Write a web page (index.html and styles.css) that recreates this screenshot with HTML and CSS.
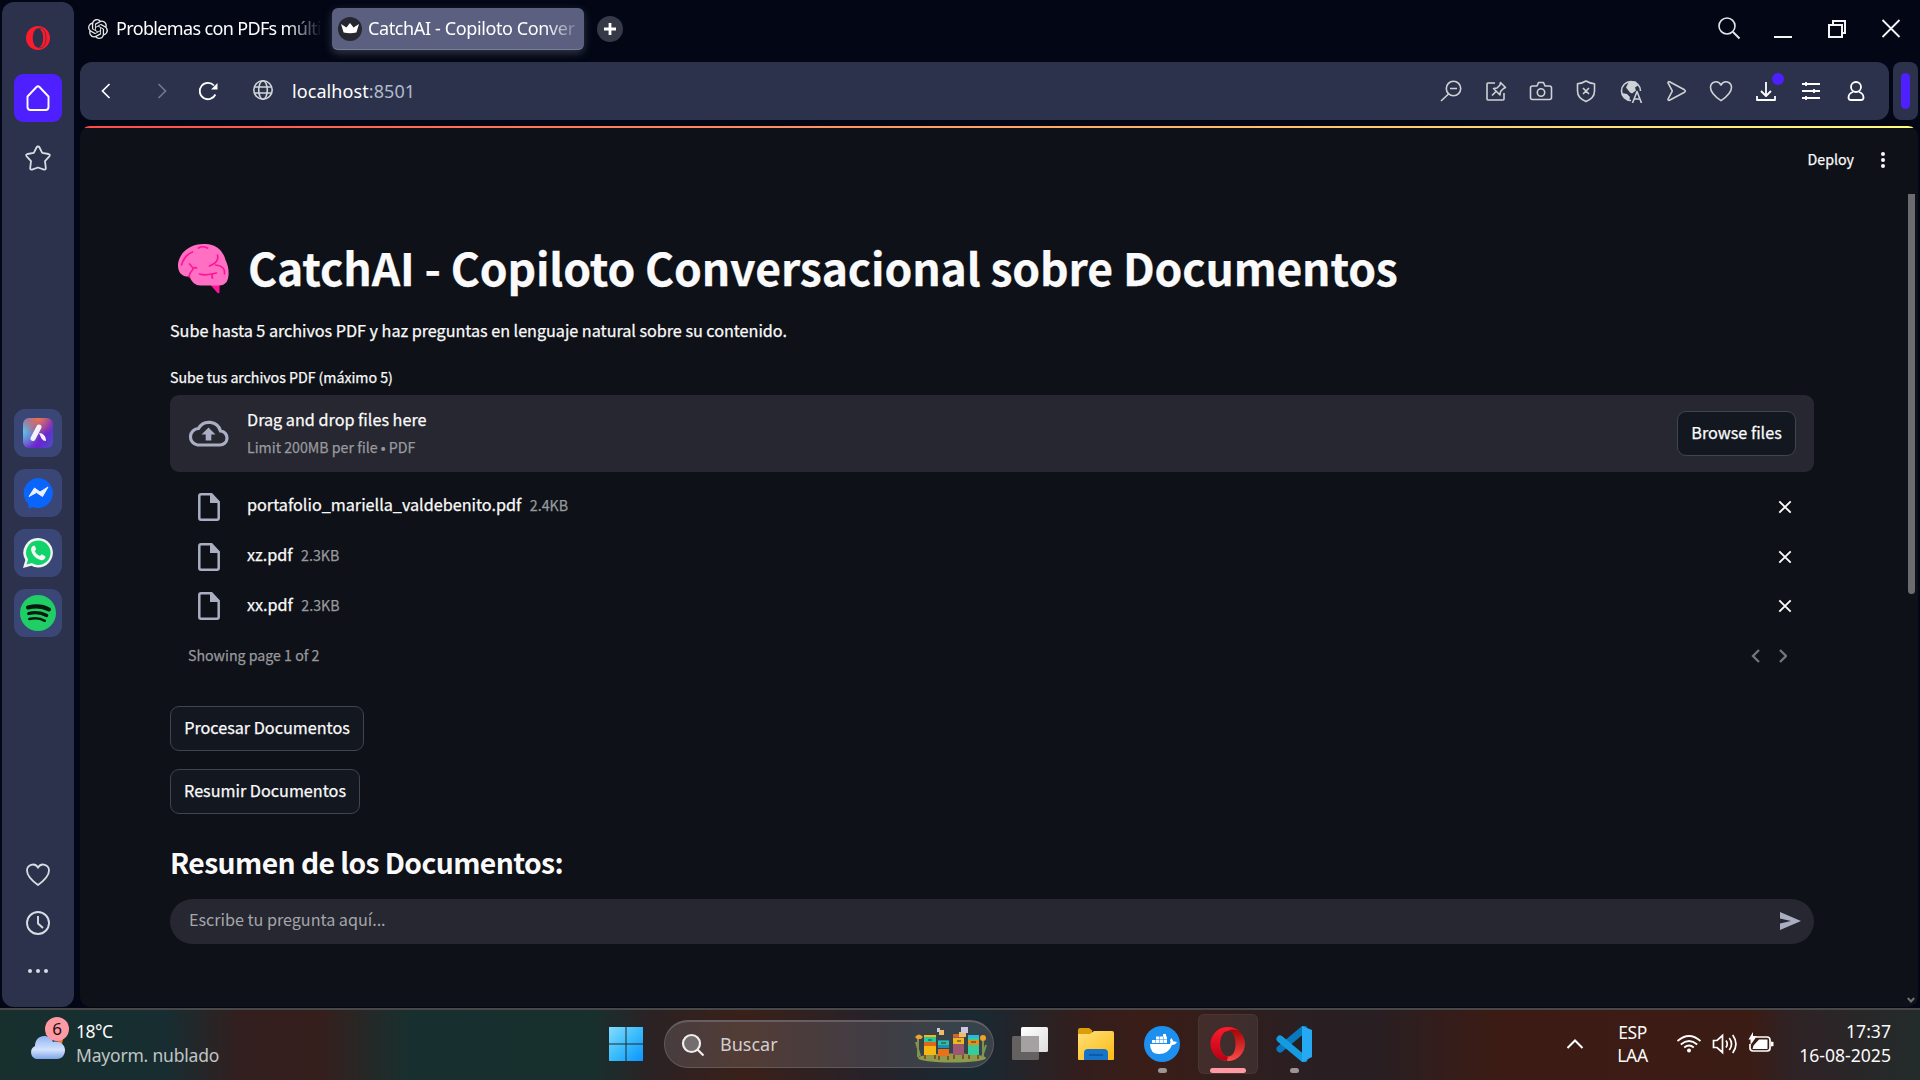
FILE: index.html
```html
<!DOCTYPE html>
<html lang="es">
<head>
<meta charset="utf-8">
<title>CatchAI - Copiloto Conversacional</title>
<link rel="stylesheet" href="styles.css">
</head>
<body>
<div class="desktop">
  <div class="browser">
    <nav class="sidebar">
      <svg class="side-opera" width="24" height="24" viewBox="0 0 24 24"><path fill="#ff1b2d" fill-rule="evenodd" d="M12 0C5.400 0 0 5.400 0 12s5.400 12 12 12 12-5.400 12-12S18.600 0 12 0zm0 2.600c3 0 5.200 4 5.200 9.400s-2.200 9.400-5.200 9.400-5.200-4-5.200-9.400S9 2.600 12 2.600z"/><path d="M12 2.600c4.500-1.800 8 2 8 9.400s-3.500 11.200-8 9.400" fill="none" stroke="#2c324b" stroke-width=".7"/></svg>
      <a class="side-home"><svg width="26" height="28" viewBox="0 0 26 28" fill="none" stroke="#fff" stroke-width="1.900" stroke-linejoin="round"><path d="M2.500 12.500 11.500 3q1.500-1.400 3 0l9 9.500v10.500q0 3-3 3h-15q-3 0-3-3z"/></svg></a>
      <svg class="side-star" width="28" height="28" viewBox="0 0 28 28" fill="none" stroke="#d5dee4" stroke-width="1.800" stroke-linejoin="round"><path d="M14 2.500q1 0 1.500 1l2.700 5.300 6.300 1.200q2.200.6.800 2.400l-4.300 4.700.8 6.900q.1 2-1.800 1.600L14 23.500l-6 2.100q-1.900.4-1.800-1.600l.8-6.900-4.300-4.700Q1.300 10.600 3.500 10l6.300-1.200 2.700-5.300q.5-1 1.500-1z"/></svg>
      <div class="side-apps">
        <a class="side-app"><span class="aria"><svg width="30" height="30" viewBox="0 0 30 30" stroke="#f2f2fa" stroke-width="5" stroke-linecap="round"><path d="M16 9 10 20.500"/><path fill="#f2f2fa" stroke="none" d="M16 15c4 0 7 3 7 8q-3 0-4.500-2.500z"/></svg></span></a>
        <a class="side-app"><svg width="30" height="30" viewBox="0 0 30 30"><path fill="#0866ff" d="M15 0a15 15 0 1 1-5 29.200L5.500 30V26A15 15 0 0 1 15 0z"/><path fill="#eef0fa" d="m6 18.500 5.500-8.500 5.500 4 8-5-5.500 9.500-6-4z" stroke="#eef0fa" stroke-linejoin="round"/></svg></a>
        <a class="side-app"><svg width="30" height="30" viewBox="0 0 30 30"><path fill="#f2f2f2" d="M15.300 0a14.700 14.700 0 1 1-7 27.700L0 30l2.300-8A14.700 14.700 0 0 1 15.300 0z"/><path fill="#10d46b" d="M15.300 2.600a12.200 12.200 0 1 1-6.500 22.500l-5.200 1.400 1.500-5A12.200 12.200 0 0 1 15.300 2.600z"/><path fill="#f5f5f5" d="M10.500 7.700q-3 1.500-2.400 4.600C9.500 18 14 21.500 18.500 22.200c2.500 0 4-1.700 4-3.700L18.800 16.300l-1.900 1.800q-3.600-1.400-5.200-4.900l1.500-1.900-1.400-3.500z"/></svg></a>
        <a class="side-app"><svg width="36" height="36" viewBox="0 0 36 36"><circle cx="18" cy="18" r="18" fill="#1fcf65"/><g fill="none" stroke="#07190e" stroke-linecap="round"><path stroke-width="4" d="M8 12.500q12-3 21 2"/><path stroke-width="3.200" d="M8.700 18.500q10-2.600 18 2"/><path stroke-width="2.500" d="M9.300 24q9-2 15.500 1.800"/></g></svg></a>
      </div>
      <div class="side-bottom">
        <svg width="26" height="26" viewBox="0 0 26 26" fill="none" stroke="#d5dee4" stroke-width="1.800"><path d="M13 24Q2 16 2 9.500c0-5.500 7.500-8.500 11-3 3.500-5.500 11-2.500 11 3q0 6.500-11 14.500z"/></svg>
        <svg width="26" height="26" viewBox="0 0 26 26" fill="none" stroke="#d5dee4" stroke-width="1.900"><circle cx="13" cy="13" r="11"/><path d="M13 6v7.500l5 4.500"/></svg>
        <svg width="26" height="26" viewBox="0 0 26 26" fill="#d5dee4"><circle cx="5" cy="13" r="2"/><circle cx="13" cy="13" r="2"/><circle cx="21" cy="13" r="2"/></svg>
      </div>
    </nav>
    <div class="window">
      <header class="tabs">
        <div class="tab">
          <svg width="20" height="20" viewBox="0 0 24 24" fill="#e8e8e8"><path d="M22.280 9.820a5.980 5.980 0 0 0-.52-4.910 6.050 6.050 0 0 0-6.510-2.900A6.070 6.070 0 0 0 4.980 4.180a5.980 5.980 0 0 0-4 2.900 6.050 6.050 0 0 0 .74 7.100 5.980 5.980 0 0 0 .51 4.910 6.050 6.050 0 0 0 6.510 2.900A5.980 5.980 0 0 0 13.260 24a6.060 6.060 0 0 0 5.770-4.210 5.990 5.990 0 0 0 4-2.900 6.060 6.060 0 0 0-.75-7.070zM13.260 22.430a4.480 4.480 0 0 1-2.880-1.040l4.920-2.840a.8.8 0 0 0 .39-.68v-6.740l2.020 1.170v5.620a4.500 4.500 0 0 1-4.450 4.510zM3.600 18.300a4.470 4.470 0 0 1-.53-3.010l4.920 2.840a.77.77 0 0 0 .78 0l5.840-3.370v2.330l-4.870 2.850A4.500 4.500 0 0 1 3.600 18.300zM2.340 7.900a4.490 4.490 0 0 1 2.370-1.980v5.680a.77.77 0 0 0 .39.680l5.810 3.350-2.020 1.170-4.830-2.790A4.500 4.500 0 0 1 2.340 7.900zm16.600 3.860-5.840-3.390L15.120 7.200l4.830 2.790a4.490 4.490 0 0 1-.68 8.100v-5.680a.79.79 0 0 0-.33-.65zm2.010-3.030-4.920-2.860a.78.78 0 0 0-.79 0L9.410 9.230V6.900l4.880-2.810a4.500 4.500 0 0 1 6.660 4.640zM8.310 12.860l-2.020-1.160V6.070a4.500 4.500 0 0 1 7.380-3.450L8.750 5.460a.8.8 0 0 0-.39.680zm1.100-2.360L12.010 9l2.610 1.500v3l-2.600 1.500-2.600-1.500z"/></svg>
          <span class="tab-title t1">Problemas con PDFs múlti</span>
        </div>
        <div class="tab active">
          <svg width="24" height="24" viewBox="0 0 24 24"><circle cx="12" cy="12" r="12" fill="#262730"/><path fill="#fff" d="m3 7 5.400 3.500L12 6l3.600 4.500L21 7l-2.600 8.500q-6.400 1.500-12.800 0z"/></svg>
          <span class="tab-title t2">CatchAI - Copiloto Conver</span>
        </div>
        <svg class="plus" width="26" height="26" viewBox="0 0 26 26"><circle cx="13" cy="13" r="13" fill="#363a48"/><path d="M13 7v12M7 13h12" stroke="#fff" stroke-width="2.800"/></svg>
        <div class="controls">
          <svg width="24" height="24" viewBox="0 0 24 24" fill="none" stroke="#e3e6e9" stroke-width="1.600"><circle cx="10" cy="9" r="8"/><path d="m16 15 6.500 6.500" stroke-width="2"/></svg>
          <svg width="24" height="24" viewBox="0 0 24 24"><path d="M3 20h18" stroke="#f4f4f4" stroke-width="2"/></svg>
          <svg width="24" height="24" viewBox="0 0 24 24" fill="none" stroke="#f4f4f4" stroke-width="2"><path d="M4 8h13v12H4zM8 8V4h12v12h-3"/></svg>
          <svg width="24" height="24" viewBox="0 0 24 24"><path d="m3.500 3 17 17m0-17-17 17" stroke="#f4f4f4" stroke-width="1.800"/></svg>
        </div>
      </header>
      <div class="address-row">
        <div class="address">
          <svg class="back" width="20" height="20" viewBox="0 0 20 20" fill="none" stroke="#fff" stroke-width="1.700"><path d="m13.500 3-7 7 7 7"/></svg>
          <svg class="fwd" width="20" height="20" viewBox="0 0 20 20" fill="none" stroke="#72788b" stroke-width="1.700"><path d="m6.500 3 7 7-7 7"/></svg>
          <svg class="reload" width="22" height="22" viewBox="0 0 22 22" fill="none" stroke="#fff" stroke-width="1.800"><path d="M18.400 14.500A8.200 8.200 0 1 1 17 5.500"/><path fill="#fff" stroke="none" d="M20.500 3v6.500H14z"/></svg>
          <svg class="globe" width="22" height="22" viewBox="0 0 22 22" fill="none" stroke="#d2d6d8" stroke-width="1.600"><circle cx="11" cy="11" r="9.200"/><ellipse cx="11" cy="11" rx="4.300" ry="9.200"/><path d="M2.500 8h17M2.500 14h17"/></svg>
          <span class="url">localhost<span class="port">:8501</span></span>
          <div class="tools">
            <svg viewBox="0 0 24 24"><circle cx="14.500" cy="9.500" r="7.200"/><path d="M9.500 15 2 22M11 9.500h7" /></svg>
            <svg viewBox="0 0 24 24"><path d="M11 4H4q-1 0-1 1v15q0 1 1 1h15q1 0 1-1v-6M16.500 3.500l5 5-2 1-3 3-.5 3.500-6.500-6.500 3.500-.5 3-3zM12 12.500 8 16.500"/></svg>
            <svg viewBox="0 0 24 24"><path d="M3.500 7H8l1.500-3.500h5L16 7h4.500q2 0 2 2v9.500q0 2-2 2h-17q-2 0-2-2V9q0-2 2-2z"/><circle cx="12" cy="13.500" r="3.700"/></svg>
            <svg viewBox="0 0 24 24"><path d="M12 2q4 2.500 8.500 2.700V12q0 7-8.500 10.500Q3.500 19 3.500 12V4.700Q8 4.500 12 2zM9 9l6 6m0-6-6 6"/></svg>
            <svg viewBox="0 0 24 24"><path d="M12 21.500A9.500 9.500 0 1 1 21.500 12"/><path fill="#ced2d5" stroke="none" d="M10 2.500h7l2 4-3 2 1 3-4 3-2-1-4-5zM3 14l5 1 3 3-1 4-5-3z"/><path d="M13.500 24 18 12.500 22.500 24M15 20h6"/></svg>
            <svg viewBox="0 0 24 24"><path d="M4 3.800q0-1.500 1.500-1l15 8q1.700 1.200 0 2.400l-15 8q-1.500.5-1.500-1l4-7.500q.5-.7 0-1.400z"/></svg>
            <svg viewBox="0 0 24 24"><path d="M12 21.700Q1.500 14.500 1.500 8.500c0-6 7.500-8 10.500-2.500 3-5.500 10.500-3.500 10.500 2.500q0 6-10.500 13.200z"/></svg>
            <span class="download"><svg class="white" viewBox="0 0 24 24"><path d="M12 3v14m-5-5 5 5 5-5M3 17v4h18v-4"/></svg><i class="notice"></i></span>
            <svg class="white" viewBox="0 0 24 24"><path d="M3 5h18M3 12h18M3 19h18M7 3v4m8 3v4m-8 3v4"/></svg>
            <svg class="white" viewBox="0 0 24 24"><circle cx="12" cy="8" r="5"/><path d="M9 13q-4.500 1.500-4.500 5.500 0 2.500 2.500 2.500h10q2.500 0 2.500-2.500 0-4-4.500-5.500"/></svg>
          </div>
        </div>
        <div class="extension"><i></i></div>
      </div>
      <main class="page">
        <div class="decoration"></div>
        <div class="app-header"><span class="deploy">Deploy</span><svg width="6" height="18" viewBox="0 0 6 18" fill="#fafafa"><circle cx="3" cy="3" r="2"/><circle cx="3" cy="9" r="2"/><circle cx="3" cy="15" r="2"/></svg></div>
        <div class="scrollbar"></div>
        <svg class="scroll-arrow" width="8" height="8" viewBox="0 0 8 8"><path d="m.8 2 3.200 3.500L7.200 2" fill="none" stroke="#707176" stroke-width="2"/></svg>
        <div class="content">
          <h1><svg width="52" height="52" viewBox="0 0 52 52"><path fill="#ff1594" d="M33 42h9v7q0 2-2 1z"/><path fill="#ff6fc4" d="M26 1C38 0 46 8 48 17c4 8 4 17 1 22q-3 4-9 3.500H23q-8 0-11-9C5 34 0 30 .5 21 2 9 13 1 26 1z"/><path d="M4 22q3-10 11-13m6-4q4-2.500 9 0M12 21q4 4 3 5 3-2 4-1m-4 2q-4 4-3 7m10-3q6 2 17-1m-4 1q-1 2 0 4m-3-12q10-4 8-11m-2 10q10 1 9 9" fill="none" stroke="#ff1594" stroke-width="1.700" stroke-linecap="round"/></svg><span>CatchAI - Copiloto Conversacional sobre Documentos</span></h1>
          <p class="intro">Sube hasta 5 archivos PDF y haz preguntas en lenguaje natural sobre su contenido.</p>
          <label class="upload-label">Sube tus archivos PDF (máximo 5)</label>
          <section class="dropzone">
            <svg class="cloud" width="41" height="28" viewBox="0 0 41 28"><path d="M9.500 26h22a7 7 0 0 0 1-14A12 12 0 0 0 10.500 9.500 8.300 8.300 0 0 0 9.500 26z" fill="none" stroke="#a9aec3" stroke-width="3.200"/><path fill="#a9aec3" d="m20.500 8.500 7 7h-4.200v6h-5.600v-6h-4.200z"/></svg>
            <div class="drop-copy"><div class="drop-title">Drag and drop files here</div><div class="drop-limit">Limit 200MB per file • PDF</div></div>
            <button class="btn browse">Browse files</button>
          </section>
          <div class="files">
            <div class="file"><svg class="doc" width="22" height="28" viewBox="0 0 22 28"><path d="M1.300 3q0-1.700 1.700-1.700h10.500L20.700 9v16q0 1.700-1.700 1.700H3q-1.700 0-1.700-1.700z" fill="none" stroke="#a9aec3" stroke-width="2.500"/><path fill="#a9aec3" d="M12 1h2l7 7.500V10h-9z"/></svg><span class="name n1">portafolio_mariella_valdebenito.pdf</span><span class="size">2.4KB</span><svg class="x" width="14" height="14" viewBox="0 0 14 14"><path d="m1.300 1.300 11.400 11.400m0-11.400L1.300 12.700" stroke="#fafafa" stroke-width="1.900"/></svg></div>
            <div class="file"><svg class="doc" width="22" height="28" viewBox="0 0 22 28"><path d="M1.300 3q0-1.700 1.700-1.700h10.500L20.700 9v16q0 1.700-1.700 1.700H3q-1.700 0-1.700-1.700z" fill="none" stroke="#a9aec3" stroke-width="2.500"/><path fill="#a9aec3" d="M12 1h2l7 7.500V10h-9z"/></svg><span class="name">xz.pdf</span><span class="size">2.3KB</span><svg class="x" width="14" height="14" viewBox="0 0 14 14"><path d="m1.300 1.300 11.400 11.400m0-11.400L1.300 12.700" stroke="#fafafa" stroke-width="1.900"/></svg></div>
            <div class="file"><svg class="doc" width="22" height="28" viewBox="0 0 22 28"><path d="M1.300 3q0-1.700 1.700-1.700h10.500L20.700 9v16q0 1.700-1.700 1.700H3q-1.700 0-1.700-1.700z" fill="none" stroke="#a9aec3" stroke-width="2.500"/><path fill="#a9aec3" d="M12 1h2l7 7.500V10h-9z"/></svg><span class="name">xx.pdf</span><span class="size">2.3KB</span><svg class="x" width="14" height="14" viewBox="0 0 14 14"><path d="m1.300 1.300 11.400 11.400m0-11.400L1.300 12.700" stroke="#fafafa" stroke-width="1.900"/></svg></div>
          </div>
          <div class="pager"><span>Showing page 1 of 2</span><svg width="36" height="14" viewBox="0 0 36 14" fill="none" stroke="#75767a" stroke-width="2.300"><path d="M8 1 2 7l6 6M29 1l6 6-6 6"/></svg></div>
          <button class="btn process">Procesar Documentos</button>
          <button class="btn summarize">Resumir Documentos</button>
          <h2>Resumen de los Documentos:</h2>
          <div class="chat"><span>Escribe tu pregunta aquí...</span><svg width="21" height="18" viewBox="0 0 21 18"><path fill="#a9aec3" d="M0 0 21 9 0 18v-6.500L11 9 0 6.500z"/></svg></div>
        </div>
      </main>
    </div>
  </div>
  <footer class="taskbar">
    <div class="weather">
      <div class="weather-icon"><svg width="37" height="28" viewBox="0 0 37 28"><defs><linearGradient id="cl" x2="0" y2="1"><stop stop-color="#8fb3f5"/><stop offset=".6" stop-color="#d3e2fc"/><stop offset="1" stop-color="#7fa4ea"/></linearGradient></defs><path fill="#f77b18" d="M17 3h14l4 5-1 5z"/><path fill="url(#cl)" d="M8 28a7 7 0 0 1-1-13C7 8 12 4.500 17 5s7 3 8 6c7-2 12 3 12 8s-3 9-8 9z"/></svg><span class="badge">6</span></div>
      <div class="weather-text"><div class="temp">18°C</div><div class="cond">Mayorm. nublado</div></div>
    </div>
    <div class="launcher">
      <svg class="win" width="36" height="36" viewBox="0 0 36 36"><defs><linearGradient id="wn" x2="1" y2="1"><stop stop-color="#84dcff"/><stop offset=".5" stop-color="#3bbcfb"/><stop offset="1" stop-color="#0996ff"/></linearGradient></defs><path fill="url(#wn)" d="M1 1h16.500v16.500H1zm17.500 0H35v16.500H18.500zM1 18.500h16.500V35H1zm17.500 0H35V35H18.500z"/></svg>
      <div class="search"><svg width="24" height="24" viewBox="0 0 24 24" fill="none" stroke="#f0eeee" stroke-width="2.200"><circle cx="10.500" cy="10.500" r="8.500" fill="#746c6d"/><path d="m16.500 16.500 6 6"/></svg><span>Buscar</span>
        <svg class="hives" width="72" height="36" viewBox="0 0 72 36"><ellipse cx="37" cy="31" rx="34" ry="4.500" fill="#8f9b4c"/><path d="M3 12v18M1 15l4 14M68 14v16m3-12-4 12" stroke="#7d9450" stroke-width="2"/><g><path fill="#f5b714" d="M9 8h12v20H9z"/><path fill="#27c9a0" d="M9 10h12v5H9z"/><path fill="#df6717" d="M9 15h12v4H9z"/><path fill="#1c8fb7" d="M23 13h11v8H23z"/><path fill="#33bd98" d="M23 14h11v4H23z"/><path fill="#e8711a" d="M23 22h11v7H23z"/><path fill="#9c5775" d="M38 8h11v20H38z"/><path fill="#efb91d" d="M38 11h11v6H38z"/><path fill="#d7651f" d="M38 7h11v3H38z"/><path fill="#35cd9a" d="M53 9h11v19H53z"/><path fill="#e98d17" d="M53 13h11v5H53z"/><path fill="#2eb8d7" d="M53 8h11v3H53z"/></g><path d="M13 13h4m9 3h5m11-2h4m10 1h5" stroke="#263a3c" stroke-width="1.200"/><path d="M10 28v4m10-4v4m4-3v4m9-4v4m6-5v4m9-4v4m6-4v4m9-4v4" stroke="#855026" stroke-width="2"/><path fill="#f2a228" d="M0 10q4-5 8 0l-2 2H2z"/><circle cx="68" cy="11" r="3" fill="#f2a228"/><path fill="#efbd66" d="M24 3h5v5h-5zm20 2h7v5h-7z"/><path fill="#cbc7e2" d="M22 1h3v4h-3zm24-1h7v6h-7z"/></svg></div>
      <svg class="views" width="36" height="36" viewBox="0 0 36 36"><defs><linearGradient id="tv" x2="1" y2="1"><stop stop-color="#fff"/><stop offset="1" stop-color="#ddd"/></linearGradient></defs><rect y="10" width="27" height="24" rx="1.500" fill="#656161"/><rect x="9" y="1" width="27" height="25" rx="1.500" fill="url(#tv)"/><path fill="#a3a1a1" d="M9 10h18v16H9z"/></svg>
      <svg class="folder" width="36" height="36" viewBox="0 0 36 36"><defs><linearGradient id="fd" x2=".8" y2="1"><stop stop-color="#ffe07b"/><stop offset="1" stop-color="#fdbd18"/></linearGradient></defs><path fill="#dc9d0b" d="M0 4q0-2 2-2h9l4 3h-1v5H0z"/><path fill="url(#fd)" d="M0 8h12l4-3h18q2 0 2 2v26q0 1-1 1H1q-1 0-1-1z"/><path fill="#1673c7" d="M6 34V27q0-4 4-4h16q4 0 4 4v7z"/><path d="M11 29h14" stroke="#0b50a0" stroke-width="1.500"/></svg>
      <div class="app"><svg width="36" height="36" viewBox="0 0 36 36"><circle cx="18" cy="18" r="18" fill="#1d8fef"/><path fill="#fff" d="M6 18h20q1-2 0-4l1.500-2 2 3.500q2-.3 3.500.5-1.500 3-5 3-3.500 9-13 9Q6 28 6 18zM8 14h3.500v3H8zm4-3.500h3.500v3H12zm0 3.500h3.500v3H12zm4-3.500h3.500v3H16zm0 3.500h3.500v3H16zm3-6h3v2.500h-3zm1 2.500h3v3h-3zm0 3.500h3v3h-3z"/></svg><i></i></div>
      <div class="app current"><svg width="36" height="36" viewBox="0 0 36 36"><defs><linearGradient id="or" x2="0" y2="1"><stop stop-color="#ff1b2d"/><stop offset="1" stop-color="#b50012"/></linearGradient><linearGradient id="oi" x2="0" y2="1"><stop stop-color="#9c0000"/><stop offset="1" stop-color="#ff4b4b"/></linearGradient></defs><path fill="url(#oi)" fill-rule="evenodd" d="M18 1a17 17 0 1 1 0 34 17 17 0 0 1 0-34zm0 4c-5 0-8 6-8 13s3 12.500 8 12.500 7.500-5.500 7.500-12.500S23 5 18 5z"/><path fill="url(#or)" d="M18 1a17 17 0 0 1 11.500 4.500C26.500 3.500 22 2.500 18 5c-5 0-8 6-8 13s3 12.500 8 12.500q-1 4-1 4.500A17 17 0 0 1 18 1z"/></svg><i></i></div>
      <div class="app"><svg width="36" height="36" viewBox="0 0 36 36"><path d="m4 23 24-20" stroke="#0878c1" stroke-width="7" stroke-linecap="round"/><path d="m4 13 24 20" stroke="#149be0" stroke-width="7" stroke-linecap="round"/><path fill="#25a9f3" d="M26 0l10 4v27l-10 5z"/><path fill="#222021" d="m17 18 9-7v14z"/></svg><i></i></div>
    </div>
    <div class="tray">
      <svg class="up" width="18" height="12" viewBox="0 0 18 12"><path d="m1.500 10 7.500-7.500 7.500 7.500" fill="none" stroke="#fff" stroke-width="2"/></svg>
      <div class="lang"><div>ESP</div><div>LAA</div></div>
      <div class="status">
        <svg width="26" height="24" viewBox="0 0 26 24" fill="none" stroke="#fff" stroke-width="1.700"><path d="M1.500 9q11.500-10 23 0M4.800 12.500q8.200-7 16.400 0M8.200 15.500q4.800-4 9.600 0"/><circle cx="13" cy="18.500" r="2" fill="#fff" stroke="none"/></svg>
        <svg width="26" height="24" viewBox="0 0 26 24" fill="none" stroke="#fff" stroke-width="1.700"><path d="M1.500 8.500H5l5.500-5v17L5 15.500H1.500zM14 8.500q2.500 3.500 0 7M17.300 6q4.500 6 0 12M20.700 3q6.500 9 0 18"/></svg>
        <svg width="26" height="24" viewBox="0 0 26 24"><path d="M8 5h11q3 0 3 3v8q0 3-3 3H5q-3 0-3-3v-4" fill="none" stroke="#fff" stroke-width="1.700"/><path fill="#fff" d="M11 7.500h8.500V17H4.500l1-3.500zM23 9.500l2.500.5v4l-2.500.5zM5 0v4h4L2.500 13V7.500H.5z"/></svg>
      </div>
      <div class="clock"><div class="time">17:37</div><div class="date">16-08-2025</div></div>
    </div>
  </footer>
</div>
</body>
</html>
```
FILE: styles.css
```css
* { box-sizing: border-box; }
html, body { margin: 0; height: 100%; overflow: hidden; }
body { background: #020615; color: #fafafa; font-family: "Noto Sans", sans-serif; }
svg { display: block; flex: none; }
i { display: block; }

.desktop { width: 1920px; height: 1080px; display: flex; flex-direction: column; }
.browser { height: 1008px; display: flex; padding: 2px 2px 0 2px; gap: 6px; }

.sidebar { width: 72px; height: 1005px; background: #2c324b; border-radius: 12px; display: flex; flex-direction: column; align-items: center; padding-top: 24px; }
.side-opera { width: 24px; }
.side-home { margin-top: 24px; width: 48px; height: 48px; border-radius: 9px; background: #4e1fff; display: flex; align-items: center; justify-content: center; }
.side-star { margin-top: 22px; width: 28px; height: 28px; }
.side-apps { margin-top: 236.500px; display: flex; flex-direction: column; gap: 12.200px; }
.side-app { width: 48px; height: 48px; border-radius: 11px; background: #3a4675; display: flex; align-items: center; justify-content: center; }
.aria { width: 30px; height: 30px; border-radius: 6px; background: radial-gradient(circle at 50% 0, #f07548 0, transparent 55%), radial-gradient(circle at 0 45%, #62c4e0 0, transparent 50%), linear-gradient(120deg, #6f6fd0, #6a24d0 65%, #4850c8); }
.side-bottom { margin-top: auto; margin-bottom: 23px; display: flex; flex-direction: column; gap: 22.500px; }

.window { flex: 1; min-width: 0; display: flex; flex-direction: column; }
.tabs { height: 60px; display: flex; align-items: center; padding-bottom: 6px; }
.tab { display: flex; align-items: center; gap: 8px; height: 42px; width: 244px; padding-left: 8px; }
.tab.active { margin-left: 8px; width: 252px; padding-left: 6px; gap: 6px; background: #5b6080; border-bottom: 1px solid #777d9b; border-radius: 6px; box-shadow: 0 3px 9px #343848; }
.tab-title { font-size: 18px; line-height: 26px; margin-top: -2px; white-space: nowrap; color: #fff; flex: 1; -webkit-mask-image: linear-gradient(90deg, #000 82%, transparent 99%); mask-image: linear-gradient(90deg, #000 82%, transparent 99%); }
.t1 { letter-spacing: -.65px; }
.t2 { letter-spacing: -.38px; }
.plus { margin-left: 13px; }
.controls { margin-left: auto; display: flex; gap: 30px; padding-right: 15px; }

.address-row { display: flex; gap: 4px; height: 58px; }
.address { width: 1810px; border-radius: 12px; background: #2c324b; display: flex; align-items: center; padding-left: 16px; }
.fwd { margin-left: 36px; }
.reload { margin-left: 25px; }
.globe { margin-left: 33px; margin-top: -2px; }
.url { margin-left: 18px; font-size: 18px; line-height: 26px; letter-spacing: .08px; color: #fff; }
.port { color: #b0bbcb; }
.tools { margin-left: auto; margin-right: 21px; display: flex; gap: 21px; }
.tools svg { width: 24px; height: 24px; fill: none; stroke: #ced2d5; stroke-width: 1.600; stroke-linejoin: round; }
.tools svg.white { stroke: #fff; stroke-width: 1.800; }
.download { position: relative; }
.notice { position: absolute; left: 18px; top: -6px; width: 12px; height: 12px; border-radius: 50%; background: #4e1fff; }
.extension { width: 25px; border-radius: 8px; background: #2c324b; padding: 11px 8px; }
.extension i { width: 9px; height: 36px; border-radius: 5px; background: #4e1fff; }

.page { margin-top: 6px; height: 881px; background: #0e1117; border-radius: 10px; overflow: hidden; position: relative; font-family: "Noto Sans CJK JP", sans-serif; -webkit-text-stroke: .25px currentColor; }
.decoration { height: 2px; background: linear-gradient(90deg, #ff4b4b, #fffd80); }
.app-header { height: 64px; display: flex; align-items: center; justify-content: flex-end; padding-right: 32px; gap: 26px; }
.deploy { font-size: 14.200px; line-height: 20px; margin-top: -2px; }
.scrollbar { position: absolute; right: 3px; top: 68px; width: 7px; height: 400px; border-radius: 0 0 4px 4px; background: #6b6c70; }
.scroll-arrow { position: absolute; right: 3px; top: 870px; }

.content { width: 1644px; margin-left: 90px; display: flex; flex-direction: column; align-items: flex-start; white-space: nowrap; }
h1 { margin: 46px 0 0; height: 60px; display: flex; align-items: center; padding-left: 7px; gap: 18px; font-size: 44.500px; line-height: 60px; font-weight: 700; letter-spacing: -.16px; }
h1 svg { margin-top: 2px; width: 53px; }
h1 span { margin-top: -2px; }
.intro { margin: 18px 0 0; height: 28px; font-size: 16.200px; line-height: 28px; letter-spacing: -.03px; }
.upload-label { margin-top: 23px; height: 20px; font-size: 14.200px; line-height: 20px; letter-spacing: -.03px; }
.dropzone { margin-top: 8px; width: 100%; height: 77px; border-radius: 9px; background: #262730; display: flex; align-items: center; padding: 0 18px; }
.cloud { margin-top: -2px; }
.drop-copy { margin-left: 18px; margin-top: -2px; }
.drop-title { font-size: 16.200px; line-height: 27px; }
.drop-limit { font-size: 14.200px; line-height: 24px; margin-top: 2px; color: #98999d; }
.btn { font-family: inherit; color: #fafafa; font-size: 16.200px; line-height: 24px; height: 45px; padding: 0 0 3px; border: 1px solid #41444c; border-radius: 9px; background: #131720; white-space: nowrap; }
.browse { width: 119px; margin-left: auto; }
.files { width: 100%; margin-top: 10px; padding: 0 22px 0 28px; }
.file { height: 49.700px; display: flex; align-items: center; }
.file .doc { margin-right: 27px; }
.name { font-size: 16.200px; line-height: 24px; margin-top: -5px; }
.size { margin-left: 8.500px; font-size: 14.200px; line-height: 24px; margin-top: -3px; color: #98999d; }
.x { margin-left: auto; }
.pager { width: 100%; height: 24px; margin-top: 12.900px; display: flex; align-items: center; justify-content: space-between; padding: 0 27px 0 18px; font-size: 14.200px; line-height: 24px; color: #98999d; }
.pager span { margin-top: -1px; }
.process { width: 194px; margin-top: 38px; }
.summarize { width: 190px; margin-top: 18px; }
h2 { margin: 28px 0 0; height: 40px; font-size: 28.300px; line-height: 40px; font-weight: 700; letter-spacing: -.6px; -webkit-text-stroke: 0; }
.chat { margin-top: 17px; width: 100%; height: 45px; border-radius: 23px; background: #262730; display: flex; align-items: center; justify-content: space-between; padding: 0 13px 0 19px; font-size: 16.200px; color: #a5a6ab; line-height: 24px; letter-spacing: -.03px; -webkit-text-stroke: 0; }
.chat span { margin-top: -4px; }

.taskbar { height: 72px; border-top: 2px solid #484749; display: flex; background: linear-gradient(90deg, #17302e 0, #172d31 165px, #331f1f 240px, #351f1d 320px, #17302f 410px, #17302e 590px, #2b2224 650px, #3a2019 745px, #25222a 880px, #192932 975px, #331e1d 1080px, #3a1d17 1150px, #2a1f22 1300px, #281f23 1370px, #3c1b14 1500px, #3b1c14 1750px, #2f2225 1790px, #232b2b 1920px); font-size: 18px; }
.weather { width: 608px; display: flex; padding-left: 28px; }
.weather-icon { width: 37px; padding-top: 21px; position: relative; }
.badge { position: absolute; left: 17px; top: 7px; width: 24px; height: 24px; border-radius: 50%; background: #ff99a4; color: #1d1011; text-align: center; font-size: 17px; line-height: 24px; }
.weather-text { margin-left: 11px; padding-top: 9px; }
.temp, .cond { height: 24px; line-height: 24px; letter-spacing: -.5px; font-size: 17.500px; }
.cond { color: #c0c5c5; letter-spacing: -.2px; }
.launcher { display: flex; align-items: center; height: 68px; }
.search { margin-left: 20px; width: 330px; height: 48px; border-radius: 24px; border: 1px solid #61595c; border-top: 2px solid #655f63; background: #ffffff20; display: flex; align-items: center; padding: 0 6px 0 16px; color: #d2cecf; }
.search span { margin-left: 15px; margin-top: -1px; }
.hives { margin-left: auto; }
.views { margin-left: 18px; }
.folder { margin-left: 30px; margin-right: 18px; }
.app { position: relative; width: 60px; height: 60px; padding: 12px; }
.app + .app { margin-left: 6px; }
.app i { position: absolute; left: 26px; bottom: 1px; width: 9px; height: 5px; border-radius: 3px; background: #9c9594; }
.app.current { background: #ffffff12; border-radius: 6px; box-shadow: inset 0 0 0 1px #ffffff0c; }
.current i { left: 12px; width: 36px; background: #ff99a4; }
.tray { margin-left: auto; display: flex; align-items: center; padding-right: 29px; height: 68px; }
.lang { margin-left: 32px; width: 33px; text-align: center; line-height: 23px; letter-spacing: -.4px; font-size: 17.500px; }
.status { margin-left: 27px; display: flex; gap: 10px; }
.clock { width: 95px; margin-left: 22px; margin-top: -2px; text-align: right; line-height: 24px; font-size: 17.600px; white-space: nowrap; }
```
